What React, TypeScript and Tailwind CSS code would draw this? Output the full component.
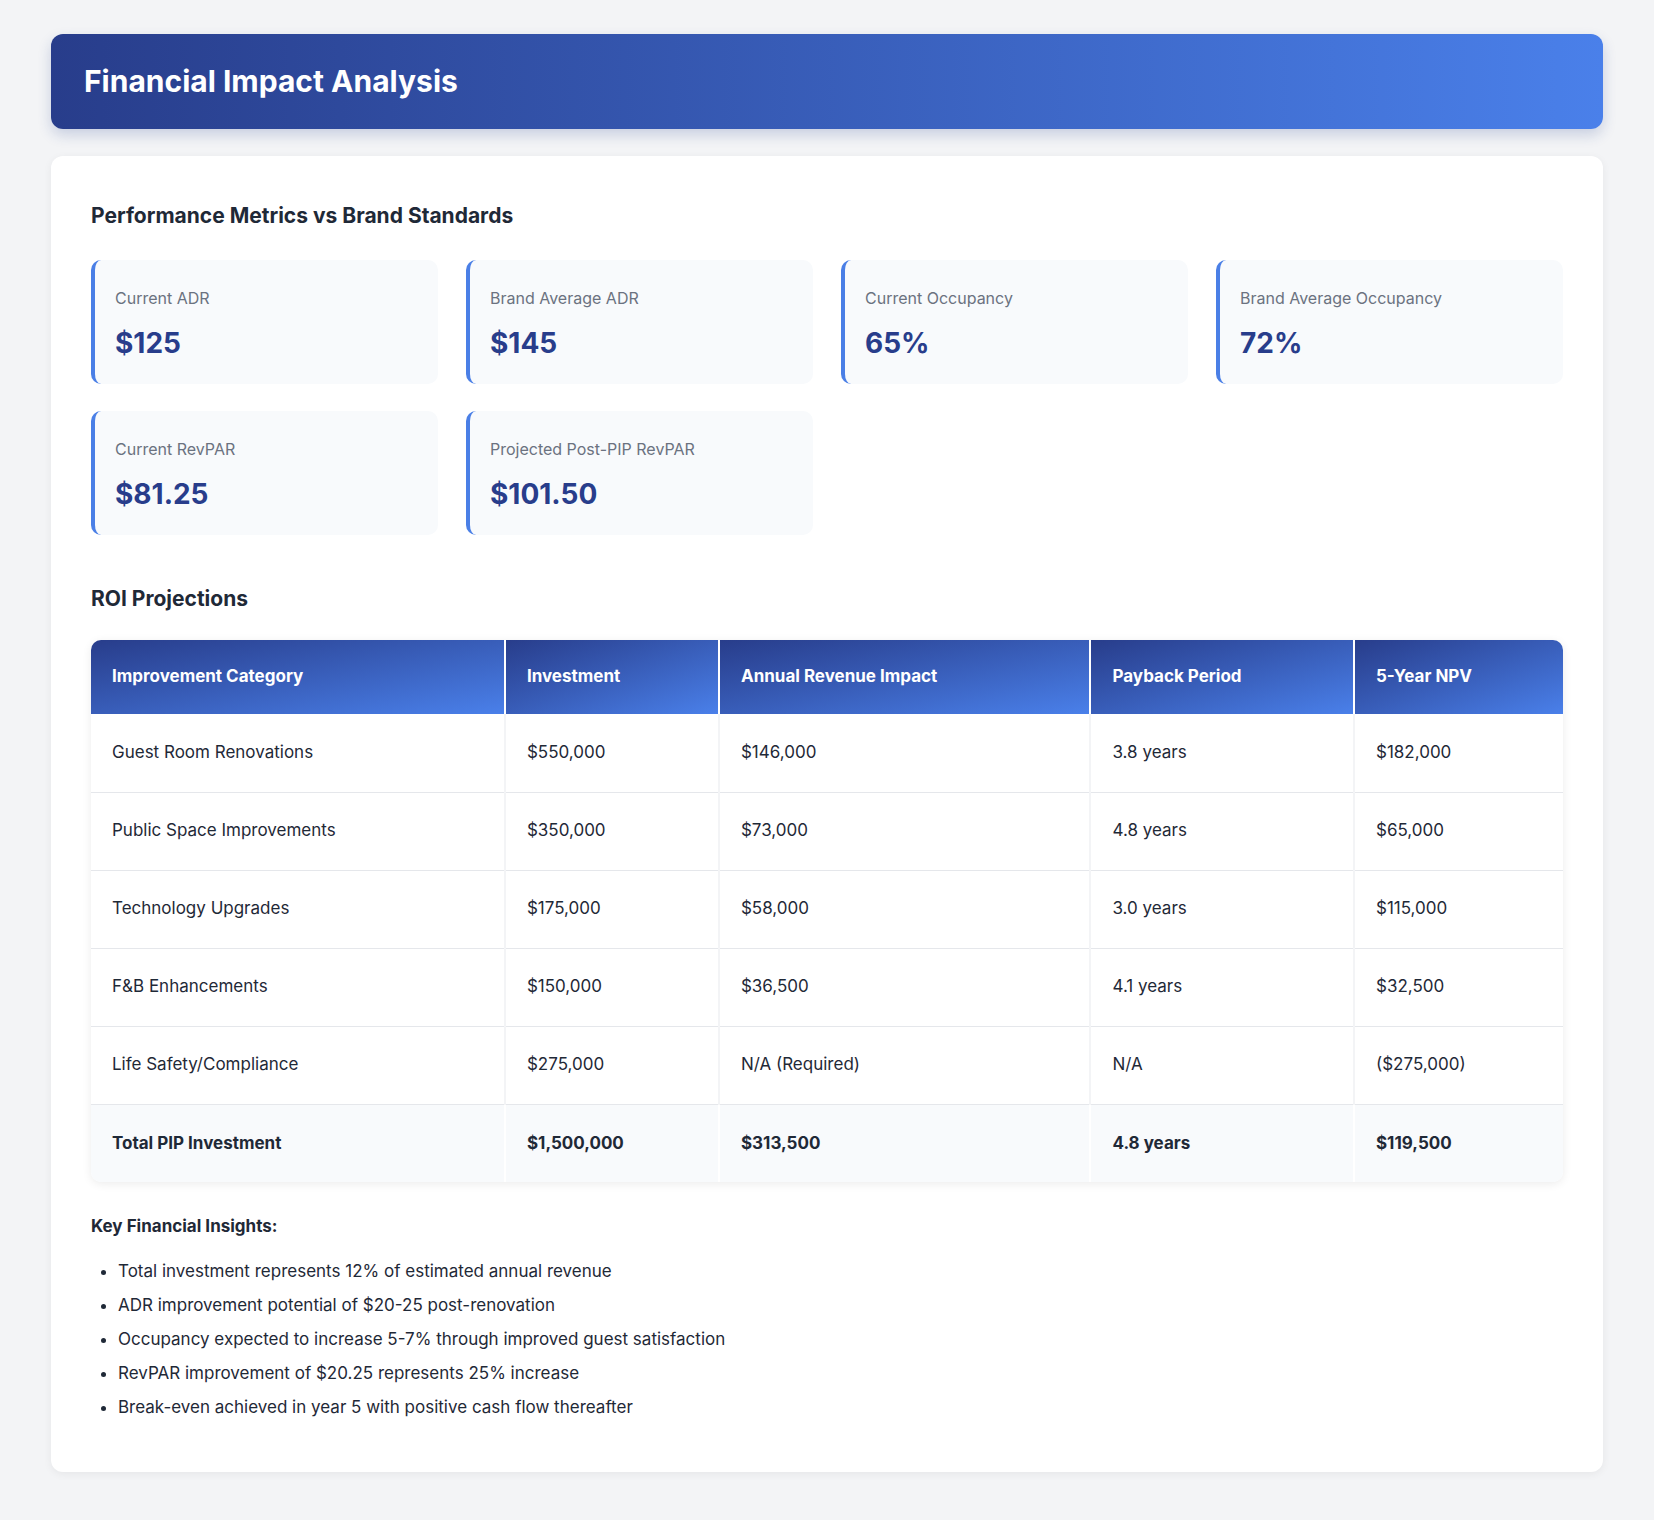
export default function App() {
  const metrics = [
    ["Current ADR", "$125"],
    ["Brand Average ADR", "$145"],
    ["Current Occupancy", "65%"],
    ["Brand Average Occupancy", "72%"],
    ["Current RevPAR", "$81.25"],
    ["Projected Post-PIP RevPAR", "$101.50"],
  ];
  const heads = ["Improvement Category", "Investment", "Annual Revenue Impact", "Payback Period", "5-Year NPV"];
  const widths = ["w-[410px]", "w-[212px]", "w-[368px]", "w-[261px]", "w-[207px]"];
  const rows = [
    ["Guest Room Renovations", "$550,000", "$146,000", "3.8 years", "$182,000"],
    ["Public Space Improvements", "$350,000", "$73,000", "4.8 years", "$65,000"],
    ["Technology Upgrades", "$175,000", "$58,000", "3.0 years", "$115,000"],
    ["F&B Enhancements", "$150,000", "$36,500", "4.1 years", "$32,500"],
    ["Life Safety/Compliance", "$275,000", "N/A (Required)", "N/A", "($275,000)"],
  ];
  const total = ["Total PIP Investment", "$1,500,000", "$313,500", "4.8 years", "$119,500"];
  const bullets = [
    "Total investment represents 12% of estimated annual revenue",
    "ADR improvement potential of $20-25 post-renovation",
    "Occupancy expected to increase 5-7% through improved guest satisfaction",
    "RevPAR improvement of $20.25 represents 25% increase",
    "Break-even achieved in year 5 with positive cash flow thereafter",
  ];
  return (
    <div className="min-h-[1520px] bg-[#f3f4f6] px-[51px] pt-[34px] pb-[28px] text-[#1f2937]" style={{ fontFamily: "Inter, 'Noto Sans', sans-serif" }}>
      <div className="h-[95px] rounded-[12px] bg-gradient-to-r from-[#283d8b] to-[#4a80ea] px-[33px] flex items-center shadow-[0_6px_14px_rgba(30,58,138,0.2)]">
        <h1 className="text-white text-[30px] font-bold">Financial Impact Analysis</h1>
      </div>
      <div className="mt-[27px] bg-white rounded-[12px] shadow-[0_2px_8px_rgba(0,0,0,0.06)] px-[40px] pt-[44px] pb-[48px]">
        <h2 className="text-[21px] font-bold text-[#1f2937]">Performance Metrics vs Brand Standards</h2>
        <div className="mt-[28px] grid grid-cols-4 gap-x-[28px] gap-y-[27px]">
          {metrics.map(([l, v]) => (
            <div key={l} className="h-[124px] bg-[#f8fafc] rounded-[10px] border-l-4 border-[#4a7fe6] pl-[20px] pt-[26px]">
              <div className="text-[16px] text-[#6b7280]">{l}</div>
              <div className="mt-[12px] text-[28px] font-bold text-[#283d8b]">{v}</div>
            </div>
          ))}
        </div>
        <h2 className="mt-[48px] text-[21px] font-bold text-[#1f2937]">ROI Projections</h2>
        <div className="mt-[26px] rounded-[10px] overflow-hidden shadow-[0_2px_10px_rgba(0,0,0,0.08)]">
          <table className="w-full table-fixed border-collapse text-[17px]">
            <thead>
              <tr>
                {heads.map((h, i) => (
                  <th key={h} className={`${widths[i]} h-[74px] text-left font-bold text-white px-[21px] bg-gradient-to-br from-[#283d8b] to-[#4a80ea] border-r-2 border-white last:border-r-0`}>{h}</th>
                ))}
              </tr>
            </thead>
            <tbody>
              {rows.map((r) => (
                <tr key={r[0]} className="border-b border-[#e5e7eb]">
                  {r.map((c, i) => (
                    <td key={i} className="h-[78px] px-[21px] text-[#1f2937] border-r-2 border-[#f3f4f6] last:border-r-0">{c}</td>
                  ))}
                </tr>
              ))}
              <tr className="bg-[#f8fafc]">
                {total.map((c, i) => (
                  <td key={i} className="h-[78px] px-[21px] font-bold text-[#1f2937] border-r-2 border-white last:border-r-0">{c}</td>
                ))}
              </tr>
            </tbody>
          </table>
        </div>
        <div className="mt-[32px] text-[17px] font-bold">Key Financial Insights:</div>
        <ul className="mt-[14px] list-disc pl-[27px] text-[17px] leading-[34px]">
          {bullets.map((b) => <li key={b}>{b}</li>)}
        </ul>
      </div>
    </div>
  );
}
